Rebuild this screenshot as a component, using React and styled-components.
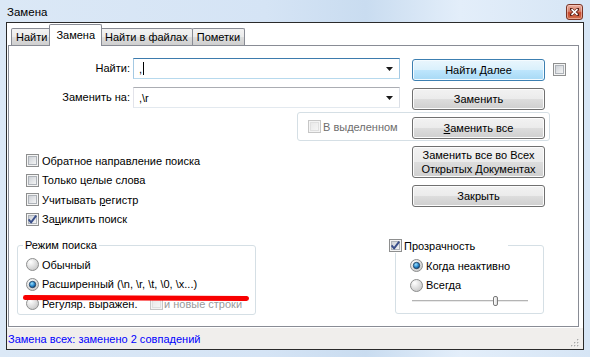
import React, { useId } from "react";
import styled, { createGlobalStyle } from "styled-components";

const GlobalStyle = createGlobalStyle`
  html, body {
    margin: 0;
    padding: 0;
  }
  body {
    background: #d6e4f3;
    font-family: "Liberation Sans", Arial, sans-serif;
    font-size: 11px;
    color: #000;
  }
`;

const Window = styled.div`
  position: relative;
  width: 590px;
  height: 357px;
  box-sizing: border-box;
  padding: 0 6px 7px 6px;
  display: flex;
  flex-direction: column;
  overflow: hidden;
  background: linear-gradient(
    90deg,
    #dbe8f6 0%,
    #d5e4f5 45%,
    #c9dcf0 62%,
    #e3eefa 78%,
    #d6e5f5 100%
  );
`;

const TitleBar = styled.div`
  height: 22px;
  display: flex;
  align-items: center;
  padding: 0 1px 0 1px;
  flex: none;
`;

const Title = styled.span`
  font-size: 11.5px;
  padding-top: 2px;
`;

const CloseButton = styled.div`
  margin-left: auto;
  margin-top: 2px;
  width: 17px;
  height: 16px;
  box-sizing: border-box;
  border: 1px solid #7a3426;
  border-radius: 3px;
  display: flex;
  align-items: center;
  justify-content: center;
  background: linear-gradient(#eab0a2 0%, #d7806b 45%, #c5452b 55%, #d2714f 100%);
  box-shadow: inset 0 0 0 1px rgba(255, 220, 210, 0.5);
`;

const Frame = styled.div`
  flex: 1;
  display: flex;
  flex-direction: column;
  border: 1px solid #2a2a2a;
  background: #fff;
  min-height: 0;
`;

const Content = styled.div`
  flex: 1;
  display: flex;
  flex-direction: column;
  padding: 1px 4px 0 1px;
  min-height: 0;
`;

const TabStrip = styled.div`
  height: 21px;
  display: flex;
  align-items: flex-end;
  padding-left: 3px;
  flex: none;
`;

const Tab = styled.div`
  position: relative;
  box-sizing: border-box;
  height: ${(p) => (p.$active ? 22 : 17)}px;
  margin: 0 ${(p) => (p.$active ? -2 : -1)}px ${(p) => (p.$active ? -1 : 0)}px
    ${(p) => (p.$active ? -2 : 0)}px;
  padding: ${(p) => (p.$active ? "3px 6px 0" : "1px 4px 0")};
  z-index: ${(p) => (p.$active ? 2 : 1)};
  border: 1px solid #898c95;
  border-bottom: 0;
  border-radius: 2px 2px 0 0;
  background: ${(p) =>
    p.$active ? "#fff" : "linear-gradient(#f3f3f3 0%, #ebebeb 50%, #dddddd 51%, #cfcfcf 100%)"};
  white-space: nowrap;
  line-height: 14px;
`;

const Panel = styled.div`
  flex: 1;
  display: flex;
  flex-direction: column;
  border: 1px solid #898c95;
  margin-bottom: 1px;
  padding-top: 12px;
  background: #fff;
  min-height: 0;
`;

const FieldRow = styled.div`
  display: flex;
  align-items: flex-start;
  height: ${(p) => p.$h}px;
  flex: none;
`;

const FieldLabel = styled.label`
  width: 121px;
  text-align: right;
  line-height: 21px;
  flex: none;
`;

const Combo = styled.div`
  margin-left: 3px;
  width: 267px;
  height: 21px;
  box-sizing: border-box;
  display: flex;
  align-items: center;
  padding: 0 6px 0 5px;
  border: 1px solid;
  border-color: ${(p) =>
    p.$focused ? "#3d7bad #a4c9e3 #b7d9ed #a4c9e3" : "#abadb3 #dbdfe6 #e3e9ef #e2e3ea"};
  background: #fff;
  flex: none;
`;

const Caret = styled.span`
  display: inline-block;
  width: 1px;
  height: 13px;
  margin-left: 1px;
  background: #000;
`;

const Arrow = styled.svg`
  margin-left: auto;
  flex: none;
`;

const Button = styled.div`
  box-sizing: border-box;
  width: 133px;
  height: ${(p) => (p.$tall ? 32 : 22)}px;
  display: flex;
  align-items: center;
  justify-content: center;
  text-align: center;
  line-height: 14px;
  border: 1px solid ${(p) => (p.$hot ? "#3c7fb1" : "#707070")};
  border-radius: 3px;
  box-shadow: inset 0 0 0 1px ${(p) => (p.$hot ? "#f4fbff" : "#fcfcfc")};
  background: ${(p) =>
    p.$hot
      ? "linear-gradient(#eaf6fd 0%, #d9f0fc 50%, #bee6fd 51%, #a7d9f5 100%)"
      : "linear-gradient(#f2f2f2 0%, #ebebeb 50%, #dddddd 51%, #cfcfcf 100%)"};
  flex: none;
`;

const RowButton = styled(Button)`
  margin: 1px 0 0 12px;
`;

const SideCheck = styled.span`
  display: flex;
  margin: 5px 0 0 8px;
`;

const SelGroup = styled.div`
  margin-left: 288px;
  width: 253px;
  height: 29px;
  box-sizing: border-box;
  border: 1px solid #d5dfe5;
  border-radius: 3px;
  display: flex;
  align-items: center;
  padding-left: 10px;
  flex: none;
`;

const SelButton = styled(Button)`
  align-self: flex-start;
  margin: 4px 4px 0 auto;
`;

const Text = styled.span`
  margin-left: ${(p) => p.$ml ?? 3}px;
  color: ${(p) => p.$color || "#000"};
  white-space: nowrap;
  ${(p) => (p.$w ? `width: ${p.$w}px; flex: none;` : "")}
`;

const Lower = styled.div`
  display: flex;
  flex: none;
`;

const LeftCol = styled.div`
  width: 380px;
  padding: 10px 0 0 8px;
  box-sizing: border-box;
  flex: none;
`;

const OptionList = styled.div`
  padding-left: 9px;
`;

const OptionRow = styled.div`
  height: 19.5px;
  display: flex;
  align-items: center;
`;

const Group = styled.fieldset`
  margin: ${(p) => p.$mt}px 0 0 ${(p) => p.$ml || 0}px;
  padding: 0;
  width: ${(p) => p.$w}px;
  box-sizing: border-box;
  border: 1px solid #d5dfe5;
  border-radius: 3px;
  min-inline-size: 0;
`;

const Legend = styled.legend`
  margin-left: 5px;
  padding: 0 2px;
  line-height: 14px;
`;

const CheckLegend = styled.legend`
  margin-left: -7px;
  padding: 0;
  width: 119px;
  height: 14px;
  display: flex;
  align-items: center;
`;

const GroupBody = styled.div`
  padding: ${(p) => p.$pad};
`;

const RightCol = styled.div`
  display: flex;
  flex-direction: column;
  align-items: flex-start;
`;

const ButtonStack = styled.div`
  display: flex;
  flex-direction: column;
  gap: 7px;
  padding: 5px 0 0 23px;
`;

const Slider = styled.div`
  position: relative;
  margin-left: 2px;
  width: 116px;
  height: 12px;
  background: linear-gradient(
    transparent 0 5px,
    #b4b4b4 5px 6px,
    #e9e9e9 6px 7px,
    transparent 7px
  );
`;

const Thumb = styled.div`
  position: absolute;
  left: 81px;
  top: 1px;
  width: 5px;
  height: 10px;
  box-sizing: border-box;
  border: 1px solid #7a7a7a;
  border-radius: 2px;
  background: linear-gradient(90deg, #ffffff, #dcdcdc);
`;

const StatusBar = styled.div`
  height: 21px;
  flex: none;
  display: flex;
  align-items: center;
  padding: 0 4px 0 1px;
  background: #f0eeec;
  color: #0000ff;
`;

const Grip = styled.svg`
  margin-left: auto;
  align-self: flex-end;
  margin-bottom: 2px;
`;

const RedMark = styled.div`
  position: absolute;
  left: 23px;
  top: 294.5px;
  width: 226px;
  height: 5px;
  border-radius: 3px;
  background: #f80000;
  transform: rotate(0.25deg);
  transform-origin: left center;
`;

const IconBox = styled.svg`
  display: block;
  flex: none;
`;

function useSafeId() {
  return "g" + useId().replace(/[^a-zA-Z0-9]/g, "");
}

function CheckBox({ checked, disabled }) {
  const id = useSafeId();
  return (
    <IconBox width="13" height="13" viewBox="0 0 13 13">
      <defs>
        <linearGradient id={id} x1="0" y1="0" x2="1" y2="1">
          <stop offset="0" stopColor={disabled ? "#e8e8e8" : "#cbcfd5"} />
          <stop offset="1" stopColor={disabled ? "#f6f6f6" : "#f7f7f7"} />
        </linearGradient>
      </defs>
      <rect x="0.5" y="0.5" width="12" height="12" fill="#f4f4f4" stroke={disabled ? "#c6c6c6" : "#8e8f8f"} />
      <rect x="2.5" y="2.5" width="8" height="8" fill={`url(#${id})`} stroke={disabled ? "#e0e0e0" : "#aeb3b9"} />
      {checked && (
        <path d="M2.6 6.4 L5.1 9.4 L10.2 2.6" fill="none" stroke="#3a4f8a" strokeWidth="1.9" strokeLinejoin="round" />
      )}
    </IconBox>
  );
}

function Radio({ checked }) {
  const id = useSafeId();
  return (
    <IconBox width="13" height="13" viewBox="0 0 13 13">
      <defs>
        <radialGradient id={id + "a"} cx="0.35" cy="0.3" r="0.8">
          <stop offset="0" stopColor="#ffffff" />
          <stop offset="1" stopColor="#c4c4c4" />
        </radialGradient>
        <radialGradient id={id + "b"} cx="0.4" cy="0.35" r="0.7">
          <stop offset="0" stopColor="#9ee0fb" />
          <stop offset="0.55" stopColor="#2a8ad0" />
          <stop offset="1" stopColor="#0b3f70" />
        </radialGradient>
      </defs>
      <circle cx="6.5" cy="6.5" r="6" fill={`url(#${id}a)`} stroke="#8e8f8f" />
      {checked && <circle cx="6.5" cy="6.5" r="3.2" fill={`url(#${id}b)`} stroke="#1e3a58" strokeWidth="0.8" />}
    </IconBox>
  );
}

function Option({ kind = "check", checked, children }) {
  return (
    <OptionRow>
      {kind === "radio" ? <Radio checked={checked} /> : <CheckBox checked={checked} />}
      <Text>{children}</Text>
    </OptionRow>
  );
}

function ComboArrow() {
  return (
    <Arrow width="7" height="4" viewBox="0 0 7 4">
      <path d="M0 0 H7 L3.5 4 Z" fill="#1a1a1a" />
    </Arrow>
  );
}

export default function App() {
  return (
    <Window>
      <GlobalStyle />
      <TitleBar>
        <Title>Замена</Title>
        <CloseButton>
          <svg width="9" height="8" viewBox="0 0 9 8">
            <path d="M1 1 L8 7 M8 1 L1 7" stroke="#5a1e14" strokeWidth="3" strokeLinecap="square" />
            <path d="M1.5 1.2 L7.5 6.8 M7.5 1.2 L1.5 6.8" stroke="#fff" strokeWidth="1.6" />
          </svg>
        </CloseButton>
      </TitleBar>
      <Frame>
        <Content>
          <TabStrip>
            <Tab>Найти</Tab>
            <Tab $active>Замена</Tab>
            <Tab>Найти в файлах</Tab>
            <Tab>Пометки</Tab>
          </TabStrip>
          <Panel>
            <FieldRow $h={29}>
              <FieldLabel>Найти:</FieldLabel>
              <Combo $focused>
                <span>,</span>
                <Caret />
                <ComboArrow />
              </Combo>
              <RowButton $hot>Найти Далее</RowButton>
              <SideCheck>
                <CheckBox />
              </SideCheck>
            </FieldRow>
            <FieldRow $h={25}>
              <FieldLabel>Заменить на:</FieldLabel>
              <Combo>
                <span>,\r</span>
                <ComboArrow />
              </Combo>
              <RowButton>Заменить</RowButton>
            </FieldRow>
            <FieldRow $h={29}>
              <SelGroup>
                <CheckBox disabled />
                <Text $ml={2} $color="#6d6d6d">
                  В выделенном
                </Text>
                <SelButton>
                  <span>
                    <u>З</u>аменить все
                  </span>
                </SelButton>
              </SelGroup>
            </FieldRow>
            <Lower>
              <LeftCol>
                <OptionList>
                  <Option>Обратное направление поиска</Option>
                  <Option>Только целые слова</Option>
                  <Option>
                    Учитывать <u>р</u>егистр
                  </Option>
                  <Option checked>
                    За<u>ц</u>иклить поиск
                  </Option>
                </OptionList>
                <Group $mt={9} $w={239}>
                  <Legend>Режим поиска</Legend>
                  <GroupBody $pad="3px 0 0 8px">
                    <Option kind="radio">Обычный</Option>
                    <Option kind="radio" checked>
                      Расширенный (\n, \r, \t, \0, \x...)
                    </Option>
                    <OptionRow>
                      <Radio />
                      <Text $w={108}>Регуляр. выражен.</Text>
                      <CheckBox disabled />
                      <Text $ml={1} $color="#9a9a9a">
                        и новые строки
                      </Text>
                    </OptionRow>
                  </GroupBody>
                </Group>
              </LeftCol>
              <RightCol>
                <ButtonStack>
                  <Button $tall>
                    <span>
                      Заменить все во Всех
                      <br />
                      Открытых <u>Д</u>окументах
                    </span>
                  </Button>
                  <Button>Закрыть</Button>
                </ButtonStack>
                <Group $mt={31.5} $ml={6} $w={149}>
                  <CheckLegend>
                    <CheckBox checked />
                    <Text $ml={2}>Прозрачность</Text>
                  </CheckLegend>
                  <GroupBody $pad="3.5px 0 6px 14px">
                    <Option kind="radio" checked>
                      Когда неактивно
                    </Option>
                    <Option kind="radio">Всегда</Option>
                    <Slider>
                      <Thumb />
                    </Slider>
                  </GroupBody>
                </Group>
              </RightCol>
            </Lower>
          </Panel>
        </Content>
        <StatusBar>
          <span>Замена всех: заменено 2 совпадений</span>
          <Grip width="8" height="8" viewBox="0 0 8 8">
            {[
              [6, 0],
              [3, 3],
              [6, 3],
              [0, 6],
              [3, 6],
              [6, 6],
            ].map(([x, y]) => (
              <g key={`${x}-${y}`}>
                <rect x={x + 0.6} y={y + 0.6} width="1.4" height="1.4" fill="#fff" />
                <rect x={x} y={y} width="1.4" height="1.4" fill="#a8a8a8" />
              </g>
            ))}
          </Grip>
        </StatusBar>
      </Frame>
      <RedMark />
    </Window>
  );
}
